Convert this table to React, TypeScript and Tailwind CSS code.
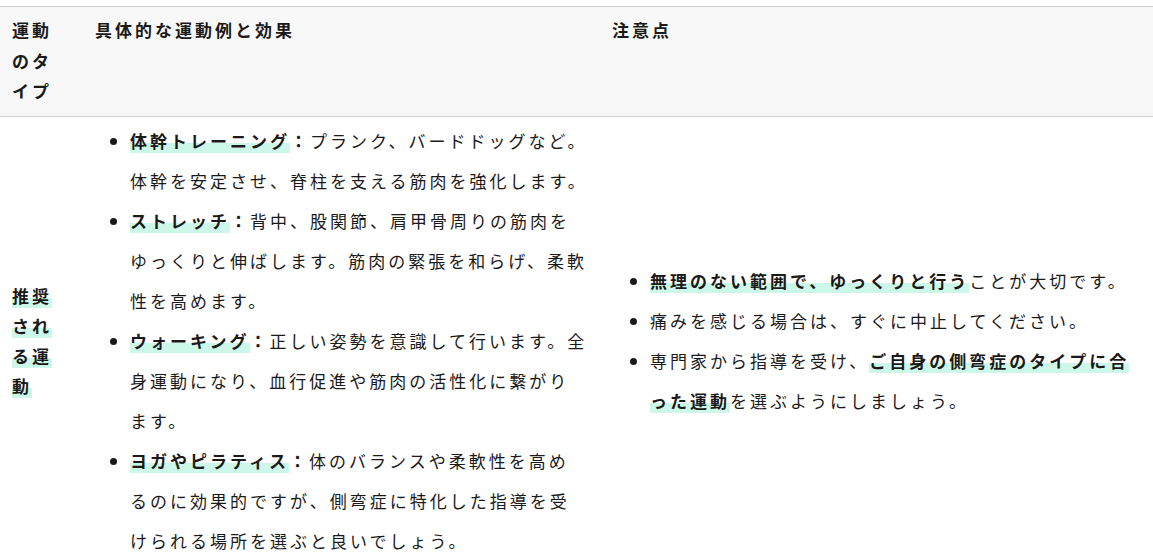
import React from "react";

const hl = "bg-[linear-gradient(transparent_60%,#cdf7e8_60%)]";

export default function App() {
  return (
    <div
      className="w-[1153px] h-[560px] overflow-hidden bg-white text-[#1a1a1a]"
      style={{ fontFamily: '"Noto Sans CJK JP", "Noto Sans", sans-serif' }}
    >
      <table className="mt-[6px] w-full table-fixed border-collapse text-[17px] tracking-[3px]">
        <colgroup>
          <col className="w-[83px]" />
          <col className="w-[517px]" />
          <col />
        </colgroup>
        <thead>
          <tr className="bg-[#f8f8f8] border-y border-[#d2d2d2]">
            <th className="pl-3 pr-5 pt-2 pb-[9px] text-left align-top font-bold leading-[30.6px]">
              運動のタイプ
            </th>
            <th className="px-3 pt-2 pb-[9px] text-left align-top font-bold leading-[30.6px]">
              具体的な運動例と効果
            </th>
            <th className="px-3 pt-2 pb-[9px] text-left align-top font-bold leading-[30.6px]">
              注意点
            </th>
          </tr>
        </thead>
        <tbody>
          <tr className="border-b border-[#d2d2d2]">
            <td className="pl-3 pr-5 py-1 align-middle leading-[30px]">
              <strong className={hl}>推奨される運動</strong>
            </td>
            <td className="pl-3 pr-1 py-1 align-middle">
              <ul className="list-disc pl-[35px] leading-[40px]">
                <li>
                  <strong>
                    <span className={hl}>体幹トレーニング</span>：
                  </strong>
                  プランク、バードドッグなど。
                  <br />
                  体幹を安定させ、脊柱を支える筋肉を強化します。
                </li>
                <li>
                  <strong>
                    <span className={hl}>ストレッチ</span>：
                  </strong>
                  背中、股関節、肩甲骨周りの筋肉を
                  <br />
                  ゆっくりと伸ばします。筋肉の緊張を和らげ、柔軟
                  <br />
                  性を高めます。
                </li>
                <li>
                  <strong>
                    <span className={hl}>ウォーキング</span>：
                  </strong>
                  正しい姿勢を意識して行います。全
                  <br />
                  身運動になり、血行促進や筋肉の活性化に繋がり
                  <br />
                  ます。
                </li>
                <li>
                  <strong>
                    <span className={hl}>ヨガやピラティス</span>：
                  </strong>
                  体のバランスや柔軟性を高め
                  <br />
                  るのに効果的ですが、側弯症に特化した指導を受
                  <br />
                  けられる場所を選ぶと良いでしょう。
                </li>
              </ul>
            </td>
            <td className="px-3 py-1 align-middle">
              <ul className="list-disc pl-[38px] leading-[40px]">
                <li>
                  <strong className={hl}>無理のない範囲で、ゆっくりと行う</strong>ことが大切です。
                </li>
                <li>痛みを感じる場合は、すぐに中止してください。</li>
                <li>
                  専門家から指導を受け、<strong className={hl}>ご自身の側弯症のタイプに合った運動</strong>を選ぶようにしましょう。
                </li>
              </ul>
            </td>
          </tr>
        </tbody>
      </table>
    </div>
  );
}
